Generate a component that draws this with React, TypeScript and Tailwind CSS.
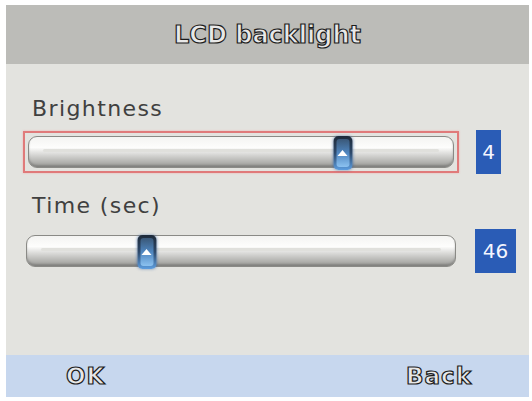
type SliderProps = {
  percent: number;
  focused?: boolean;
};

// knob on the slider rail: dark frame, blue glassy body, small up-arrow
const Thumb = () => (
  <div className="absolute top-[-1px] h-[34px] w-[19px] -translate-x-1/2 rounded-[5px] bg-gradient-to-b from-[#1d2a3a] via-[#2e4a6c] to-[#5d9ee0] p-[3px] shadow-[0_0_3px_rgba(40,90,160,0.6)]">
    <div className="flex h-full w-full flex-col items-center justify-center rounded-[3px] bg-gradient-to-b from-[#3a5878] via-[#4f86c0] to-[#8cc2f0]">
      <div className="h-0 w-0 border-x-[5px] border-b-[6px] border-x-transparent border-b-white" />
    </div>
  </div>
);

const Slider = ({ percent, focused }: SliderProps) => {
  return (
    <div
      className={
        focused
          ? "w-[436px] border-2 border-[#e07a7a] p-[3px] shadow-[0_0_2px_#f0b0b0]"
          : "w-[436px] border-2 border-transparent p-[1px]"
      }
    >
      <div className="relative h-[32px] rounded-[9px] border border-[#8a8a86] bg-gradient-to-b from-[#f4f4f2] via-[#fdfdfc] via-35% to-[#9a9a96] shadow-[inset_0_-2px_2px_rgba(80,80,80,0.35)]">
        <div className="absolute left-[14px] right-[14px] top-[12px] h-[3px] rounded-full bg-[#e0e0dc]" />
        <div className="absolute left-0 top-0 h-full" style={{ left: `${percent}%` }}>
          <Thumb />
        </div>
      </div>
    </div>
  );
};

const ValueBox = ({ value, wide }: { value: string; wide?: boolean }) => (
  <div
    className={
      "flex h-[44px] items-center justify-center bg-[#2a5cb6] text-[20px] text-[#f4f6ff] " +
      (wide ? "w-[41px]" : "w-[25px]")
    }
  >
    {value}
  </div>
);

const outlined =
  "font-bold text-[#e8e8e8] [-webkit-text-stroke:1.2px_#1c1c1c] [font-family:'DejaVu_Sans',sans-serif]";

export default function App() {
  return (
    <div className="h-[401px] w-[532px] bg-white pb-[4px] pl-[6px] pr-[3px] pt-[5px]">
      <div className="flex h-full flex-col">
        <div className="flex h-[59px] items-center justify-center bg-[#bcbcb8]">
          <span className={outlined + " text-[24px]"}>LCD backlight</span>
        </div>

        <div className="flex-1 bg-[#e3e3df] pl-[17px] pt-[32px] [font-family:'DejaVu_Sans',sans-serif] text-[#404040]">
          <div className="pl-[9px] text-[22px] leading-[26px] tracking-[1.4px]">Brightness</div>
          <div className="mt-[8px] flex items-center gap-[17px]">
            <Slider percent={74} focused />
            <ValueBox value="4" />
          </div>

          <div className="mt-[19px] pl-[9px] text-[22px] leading-[26px] tracking-[1.4px]">Time (sec)</div>
          <div className="mt-[10px] flex items-center gap-[16px]">
            <Slider percent={28} />
            <ValueBox value="46" wide />
          </div>
        </div>

        <div className="flex h-[42px] items-center justify-between bg-[#c7d7ee] pl-[60px] pr-[57px]">
          <span className={outlined + " text-[23px] tracking-[1px]"}>OK</span>
          <span className={outlined + " text-[23px] tracking-[1px]"}>Back</span>
        </div>
      </div>
    </div>
  );
}
